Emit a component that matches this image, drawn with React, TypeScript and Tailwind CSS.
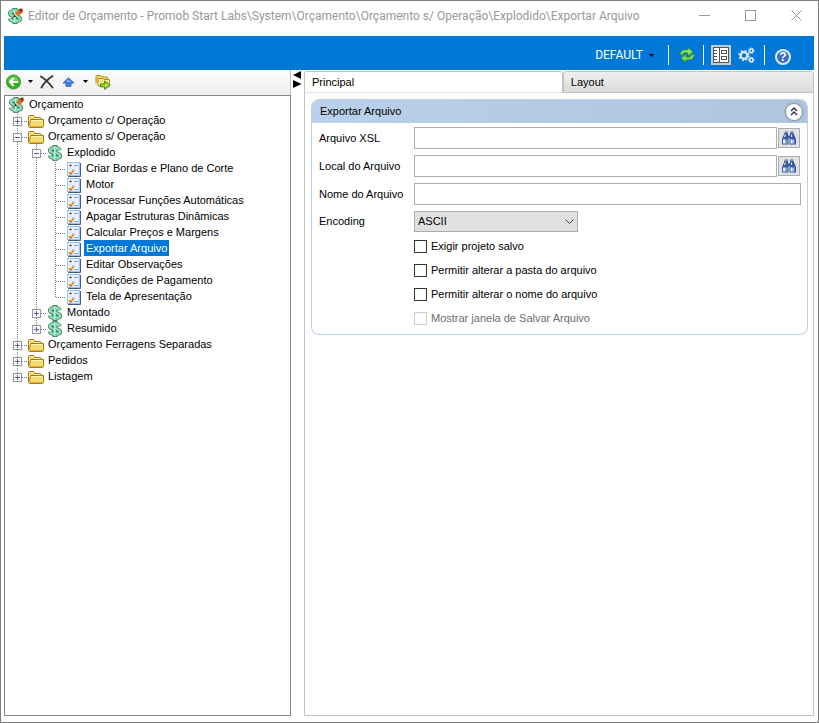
import { useState } from "react";
import type { ReactNode } from "react";

type IconKind = "root" | "folder" | "money" | "task";

interface TreeItem {
    label: string;
    icon: IconKind;
    children?: TreeItem[];
}

const tree: TreeItem[] = [
    { label: "Orçamento c/ Operação", icon: "folder", children: [] },
    {
        label: "Orçamento s/ Operação",
        icon: "folder",
        children: [
            {
                label: "Explodido",
                icon: "money",
                children: [
                    { label: "Criar Bordas e Plano de Corte", icon: "task" },
                    { label: "Motor", icon: "task" },
                    { label: "Processar Funções Automáticas", icon: "task" },
                    { label: "Apagar Estruturas Dinâmicas", icon: "task" },
                    { label: "Calcular Preços e Margens", icon: "task" },
                    { label: "Exportar Arquivo", icon: "task" },
                    { label: "Editar Observações", icon: "task" },
                    { label: "Condições de Pagamento", icon: "task" },
                    { label: "Tela de Apresentação", icon: "task" },
                ],
            },
            { label: "Montado", icon: "money", children: [] },
            { label: "Resumido", icon: "money", children: [] },
        ],
    },
    { label: "Orçamento Ferragens Separadas", icon: "folder", children: [] },
    { label: "Pedidos", icon: "folder", children: [] },
    { label: "Listagem", icon: "folder", children: [] },
];

/* ---------- icons ---------- */

function MoneyIcon({ pencil = false }: { pencil?: boolean }) {
    const curve = "M12.8 5.4C12 3.2 9.8 3 7.8 3 5 3 3 3.8 3 5.500c0 3.400 10 1.600 10 5 0 1.700-2.200 2.500-5 2.500-2.600 0-4.600-.6-5.200-2.600";
    return (
        <svg width="16" height="16" viewBox="0 0 16 16" fill="none" className="shrink-0">
            <path d="M5.500 0h5v16h-5z" fill="#3d8c6c" />
            <path d={curve} stroke="#3d8c6c" strokeWidth="4.200" />
            <path d="M6.500 1h3v14h-3z" fill="#8edcb8" />
            <path d={curve} stroke="#8edcb8" strokeWidth="2.400" />
            <path d="M5.200 5.600h1.300v1.200M10.800 10.400H9.500V9.300" stroke="#2c7456" />
            <path d="M7.500 2v12" stroke="#c9f3df" />
            {pencil && (
                <>
                    <path d="M7 8.8L8 5l3.500-3.200 3.500.2.300 3-3.700 2.800z" fill="#d0702c" />
                    <path d="M11.5 1.8L13 .6l2.500.2.300 2.500-1.300 1.200z" fill="#93310f" />
                    <path d="M7 8.8l1-3.600 2.800 2.400z" fill="#f4d5a0" />
                    <path d="M6.5 9.300l.7-2.600 2 1.800z" fill="#111" />
                </>
            )}
        </svg>
    );
}

function FolderIcon() {
    return (
        <svg width="17" height="16" viewBox="1 0 17 16" className="shrink-0">
            <path d="M1.5 13V3.5l1-1h4l1.5 2h5.5l1 1V7" fill="#efcf5a" stroke="#a87e12" />
            <path d="M2.5 12V4h3.6l1.3 1.6h6" fill="none" stroke="#fff3b8" />
            <path d="M1.6 13.6L3.8 6.5h12.7v7.2l-.9.8H2.4z" fill="#f7dc74" stroke="#a87e12" />
            <path d="M4.5 7.6h10.8" stroke="#fff7c8" />
            <path d="M3 13.4h12.4" stroke="#d5a936" />
        </svg>
    );
}

function TaskIcon() {
    return (
        <svg width="16" height="16" viewBox="0 0 16 16" className="shrink-0">
            <rect x="1.5" y="1.5" width="12" height="13" fill="#e6f1fd" stroke="#9dbce6" />
            <path d="M14.5 2v13.5H2" fill="none" stroke="#3a5e9c" />
            <path d="M13 2v12" stroke="#b9d2f2" />
            <path d="M3 4.5h3" stroke="#a2774a" />
            <path d="M4.5 3.5v2" stroke="#5b4a3a" />
            <path d="M8 4.5h4M8 12.5h4" stroke="#86a3cc" />
            <path d="M3 11.5l1.5 1.7L8 8.8" fill="none" stroke="#d08a1e" strokeWidth="1.8" />
        </svg>
    );
}

function NodeIcon({ kind }: { kind: IconKind }) {
    if (kind === "folder") return <FolderIcon />;
    if (kind === "task") return <TaskIcon />;
    return <MoneyIcon pencil={kind === "root"} />;
}

function BackIcon() {
    return (
        <svg width="16" height="16" viewBox="0 0 16 16">
            <circle cx="7.5" cy="8" r="7.1" fill="#2fb41a" stroke="#3c8f34" strokeWidth=".8" />
            <path d="M2 6.5a5.8 5.8 0 0 1 11 0c-3.6 1.6-7.4 1.6-11 0z" fill="#93e070" opacity=".6" />
            <path d="M7.8 4L4 8l3.8 4M4.5 8h7.8" fill="none" stroke="#fff" strokeWidth="2.1" />
        </svg>
    );
}

function DeleteIcon() {
    return (
        <svg width="14" height="14" viewBox="0 0 14 14">
            <path d="M1 1.5c4 2.5 8 6.5 11.5 11M12.5 1C8 4 4 8 1.5 12.5" fill="none" stroke="#35383d" strokeWidth="1.9" strokeLinecap="round" />
        </svg>
    );
}

function UpIcon() {
    return (
        <svg width="13" height="10" viewBox="0 0 13 10">
            <path d="M6.5.8L12 6H9v3.3H4V6H1z" fill="#3f7de0" stroke="#3a6cc8" strokeLinejoin="round" />
            <path d="M6.5 2l3 3h-6z" fill="#79a9f3" />
        </svg>
    );
}

function MoveFolderIcon() {
    return (
        <svg width="16" height="16" viewBox="0 0 16 16">
            <path d="M1 9.5v-8h4.5L7 3h5.5v2" fill="#f3d869" stroke="#b58d20" />
            <path d="M3 12V4.5h5l1 1h5.5V12z" fill="#f9e58a" stroke="#b58d20" />
            <path d="M5.5 10h4.2V7l5.5 4.3-5.5 4.1v-2.6H5.5z" fill="#a4e032" stroke="#3f7f10" />
        </svg>
    );
}

function RefreshIcon() {
    return (
        <svg width="18" height="16" viewBox="0 0 18 16">
            <path d="M2 7.5C2.5 3.5 6 2 10 3V.5L15 5l-5 4V6.2C7 5.2 5 5.5 4.5 8z" fill="#8ee05e" stroke="#2c8f2a" strokeWidth=".8" />
            <path d="M16.5 7.5c-.5 4.5-4 6-8.500 5.200v2.800L3 11l5-4v2.800c3 .8 5 .2 5.500-2.300z" fill="#7ed853" stroke="#2c8f2a" strokeWidth=".8" />
        </svg>
    );
}

function PanelIcon() {
    return (
        <svg width="16" height="16" viewBox="0 0 16 16">
            <rect x=".5" y=".5" width="15" height="15" fill="#fff" stroke="#555" />
            <path d="M6.5 1v14" stroke="#555" />
            <path d="M1 3.5h3M1 6.5h3M1 9.5h3M1 12.5h3" stroke="#555" />
            <rect x="8.5" y="3.5" width="5" height="3" fill="#fff" stroke="#555" />
            <rect x="8.5" y="9.5" width="5" height="3" fill="#fff" stroke="#555" />
        </svg>
    );
}

function GearsIcon() {
    return (
        <svg width="17" height="17" viewBox="0 0 17 17" fill="none" stroke="#e3e9ef">
            <circle cx="6" cy="8.5" r="3.3" strokeWidth="2.2" />
            <circle cx="6" cy="8.5" r="4.9" strokeWidth="1.5" strokeDasharray="2 1.85" />
            <circle cx="13.3" cy="3.7" r="1.7" strokeWidth="1.5" />
            <circle cx="13.3" cy="3.7" r="2.7" strokeWidth=".9" strokeDasharray="1.5 .62" />
            <circle cx="13.3" cy="13" r="1.7" strokeWidth="1.5" />
            <circle cx="13.3" cy="13" r="2.7" strokeWidth=".9" strokeDasharray="1.5 .62" />
        </svg>
    );
}

function BinocularsIcon() {
    return (
        <svg width="16" height="14" viewBox="0 0 16 14">
            <path d="M4 .5h2.5l.5 3 .5 2.5v7.500H1V8l2-4.500zM9.500.5H12l1 3L15 8v5.500H8.500V6L9 3.500z" fill="#34599c" />
            <path d="M6.5 4.5h3V7h-3z" fill="#34599c" />
            <path d="M2 8.5h4.5v4H2zM9.5 8.5H14v4H9.500z" fill="#9dbbe8" />
            <path d="M3 8.5v4M10.5 8.5v4" stroke="#f2f7ff" strokeWidth="1.5" />
            <path d="M6 8.5v4M13.5 8.5v4" stroke="#5078bc" />
            <path d="M3.5 6l1-2.5M10.5 6V3.500M4.500 1.500h1M10.500 1.500h1" stroke="#d3e2f7" strokeWidth="1.2" />
        </svg>
    );
}

function Caret() {
    return (
        <svg width="5" height="3" viewBox="0 0 5 3">
            <path d="M0 0h5L2.5 3z" fill="#000" />
        </svg>
    );
}

/* ---------- tree ---------- */

// One 19px column of the dotted guide lines
function Guide({ down, branch, last }: { down?: boolean; branch?: boolean; last?: boolean }) {
    return (
        <svg width="19" height="16" viewBox="0 0 19 16" className="block shrink-0">
            {(down || branch) && (
                <path d={last ? "M9.5 0v9" : "M9.5 0v16"} stroke="#808080" strokeDasharray="1 1" />
            )}
            {branch && <path d="M10 9.5h9" stroke="#808080" strokeDasharray="1 1" />}
        </svg>
    );
}

interface NodeProps {
    item: TreeItem;
    last: boolean;
    lines: boolean[];
    selected: string;
    onSelect: (label: string) => void;
}

function TreeNode({ item, last, lines, selected, onSelect }: NodeProps) {
    const [open, setOpen] = useState(!!item.children?.length);
    const active = selected === item.label;

    return (
        <li>
            <div className="flex h-4 items-center">
                {lines.map((line, i) => (
                    <Guide key={i} down={line} />
                ))}
                <div className="relative shrink-0">
                    <Guide branch last={last} />
                    {item.children && (
                        <button
                            type="button"
                            aria-label={(open ? "Recolher " : "Expandir ") + item.label}
                            onClick={() => setOpen(!open)}
                            className="absolute top-[5px] left-[5px]"
                        >
                            <svg width="9" height="9" viewBox="0 0 9 9" className="block">
                                <rect x=".5" y=".5" width="8" height="8" fill="#fafafa" stroke="#969696" />
                                <path d={open ? "M2 4.5h5" : "M2 4.5h5M4.5 2v5"} stroke="#4b63a7" />
                            </svg>
                        </button>
                    )}
                </div>
                <button type="button" onClick={() => onSelect(item.label)} className="flex h-4 items-center">
                    <span className="flex w-[19px] pt-px pl-px">
                        <NodeIcon kind={item.icon} />
                    </span>
                    <span className={"h-4 px-0.5 leading-4 whitespace-nowrap " + (active ? "bg-[#0078d7] text-white" : "")}>
                        {item.label}
                    </span>
                </button>
            </div>
            {open && item.children && (
                <ul>
                    {item.children.map((child, i) => (
                        <TreeNode
                            key={child.label}
                            item={child}
                            last={i === item.children!.length - 1}
                            lines={[...lines, !last]}
                            selected={selected}
                            onSelect={onSelect}
                        />
                    ))}
                </ul>
            )}
        </li>
    );
}

/* ---------- form ---------- */

function Field({ id, label, search }: { id: string; label: string; search?: boolean }) {
    return (
        <div className="flex items-center">
            <label htmlFor={id} className="w-[95px] shrink-0">{label}</label>
            <input id={id} type="text" className="h-[22px] min-w-0 flex-1 border border-[#abadb3] bg-white px-1 outline-none focus:border-[#0078d7]" />
            {search && (
                <button
                    type="button"
                    aria-label={"Procurar " + label}
                    className="mx-px flex h-5 w-[22px] items-center justify-center border border-[#adadad] bg-[#e1e1e1]"
                >
                    <BinocularsIcon />
                </button>
            )}
        </div>
    );
}

function Check({ children, disabled }: { children: ReactNode; disabled?: boolean }) {
    return (
        <label className={"flex h-6 items-center gap-1 " + (disabled ? "text-[#6d6d6d]" : "")}>
            <input
                type="checkbox"
                disabled={disabled}
                className="size-[13px] appearance-none border border-[#333] bg-white checked:bg-[#0078d7] disabled:border-[#ccc]"
            />
            {children}
        </label>
    );
}

export default function App() {
    const [selected, setSelected] = useState("Exportar Arquivo");
    const [tab, setTab] = useState("Principal");
    const [collapsed, setCollapsed] = useState(false);

    return (
        <div className="flex h-screen flex-col border border-[#7f7f7f] bg-white pr-1 pb-1.5 pl-[3px] font-['Liberation_Sans',Arial,sans-serif] text-[11px] text-black">
            {/* title bar */}
            <header className="flex h-[35px] shrink-0 items-center pb-1.5 pl-[3px] font-[Roboto,sans-serif] text-xs text-[#999]">
                <MoneyIcon pencil />
                <h1 className="ml-[5px] flex-1 truncate">
                    Editor de Orçamento - Promob Start Labs\System\Orçamento\Orçamento s/ Operação\Explodido\Exportar Arquivo
                </h1>
                <div className="flex items-center gap-[35px] pr-3">
                    <button type="button" aria-label="Minimizar">
                        <svg width="11" height="11" className="block"><path d="M0 5.5h11" stroke="#999" /></svg>
                    </button>
                    <button type="button" aria-label="Maximizar">
                        <svg width="11" height="11" className="block"><rect x=".5" y=".5" width="10" height="10" fill="none" stroke="#999" /></svg>
                    </button>
                    <button type="button" aria-label="Fechar">
                        <svg width="11" height="11" className="block"><path d="M.5.5l10 10M10.5.5l-10 10" stroke="#999" /></svg>
                    </button>
                </div>
            </header>

            {/* blue bar */}
            <div className="flex h-[34px] shrink-0 items-center justify-end bg-[#0078d7] pt-1 pr-[23px] text-white">
                <button type="button" className="mr-[14px] flex items-center gap-1.5 font-[Roboto,sans-serif] text-xs">
                    DEFAULT <Caret />
                </button>
                <span className="h-5 w-px bg-white" />
                <button type="button" aria-label="Atualizar" className="mr-[7px] ml-[9px]"><RefreshIcon /></button>
                <span className="h-5 w-px bg-white" />
                <button type="button" aria-label="Painel" className="ml-[7px] flex size-5 items-center justify-center bg-[#c5ccd3]"><PanelIcon /></button>
                <button type="button" aria-label="Configurações" className="mr-[9px] ml-[7px]"><GearsIcon /></button>
                <span className="h-5 w-px bg-white" />
                <button
                    type="button"
                    aria-label="Ajuda"
                    className="mt-1 ml-[10px] flex size-4 items-center justify-center rounded-full border-2 border-[#dfe8f5] bg-[#3a6cd0] text-[12px] leading-none font-bold"
                >
                    ?
                </button>
            </div>

            <div className="flex min-h-0 flex-1">
                {/* left side */}
                <aside className="flex w-[287px] shrink-0 flex-col">
                    <div className="flex h-[25px] shrink-0 items-center border-r border-[#c0c0c0] bg-linear-to-b from-[#fbfbfb] to-[#efefef] pb-0.5 pl-0.5">
                        <button type="button" aria-label="Adicionar" className="flex items-center gap-[6px]"><BackIcon /><Caret /></button>
                        <button type="button" aria-label="Excluir" className="ml-[7px]"><DeleteIcon /></button>
                        <button type="button" aria-label="Mover para cima" className="ml-2 flex items-center gap-2"><UpIcon /><Caret /></button>
                        <button type="button" aria-label="Mover para pasta" className="ml-[7px]"><MoveFolderIcon /></button>
                    </div>
                    <nav className="min-h-0 flex-1 overflow-auto border border-[#828790] pl-[3px]">
                        <button type="button" onClick={() => setSelected("Orçamento")} className="flex h-4 items-center">
                            <span className="flex w-[19px] pt-px"><NodeIcon kind="root" /></span>
                            <span className={"h-4 px-0.5 leading-4 " + (selected === "Orçamento" ? "bg-[#0078d7] text-white" : "")}>Orçamento</span>
                        </button>
                        <ul>
                            {tree.map((item, i) => (
                                <TreeNode key={item.label} item={item} last={i === tree.length - 1} lines={[]} selected={selected} onSelect={setSelected} />
                            ))}
                        </ul>
                    </nav>
                </aside>

                {/* splitter */}
                <div className="w-[13px] shrink-0 pt-px pl-0.5">
                    <svg width="9" height="18" viewBox="0 0 9 18" className="block">
                        <path d="M8 0v8L0 4zM0 9v8l8.5-4z" fill="#000" />
                    </svg>
                </div>

                {/* right side */}
                <main className="flex min-w-0 flex-1 flex-col pt-px">
                    <div role="tablist" className="flex h-[22px] shrink-0">
                        {["Principal", "Layout"].map((name) => (
                            <button
                                key={name}
                                type="button"
                                role="tab"
                                aria-selected={tab === name}
                                onClick={() => setTab(name)}
                                className={
                                    "rounded-t-[3px] border border-[#c3c3c3] pl-[7px] text-left " +
                                    (name === "Principal" ? "flex-[259] " : "flex-[251] ") +
                                    (tab === name ? "border-b-[#e0e0e0] bg-white" : "bg-linear-to-b from-[#efefef] to-[#dcdcdc]")
                                }
                            >
                                {name}
                            </button>
                        ))}
                    </div>
                    <div className="min-h-0 flex-1 border border-t-0 border-[#c3c3c3] pt-1.5 pr-[5px] pl-1.5">
                        <section className="rounded-lg border border-[#b8d0ea]">
                            <div className="flex h-[23px] items-center justify-between rounded-t-[7px] bg-linear-to-r from-[#b9d1ea] to-[#b0c4de] pr-[5px] pl-2">
                                <h2>Exportar Arquivo</h2>
                                <button
                                    type="button"
                                    aria-label="Recolher"
                                    onClick={() => setCollapsed(!collapsed)}
                                    className="flex size-4 items-center justify-center rounded-full bg-white shadow-[0_0_2px_1px_#7d8798]"
                                >
                                    <svg width="8" height="9" viewBox="0 0 8 9" fill="none" stroke="#23315e" strokeWidth="1.4">
                                        <path d="M1 4l3-3 3 3M1 8l3-3 3 3" />
                                    </svg>
                                </button>
                            </div>
                            {!collapsed && (
                                <div className="flex flex-col gap-1.5 pt-1 pr-1.5 pb-1 pl-[7px]">
                                    <Field id="xsl" label="Arquivo XSL" search />
                                    <Field id="local" label="Local do Arquivo" search />
                                    <Field id="nome" label="Nome do Arquivo" />
                                    <div className="flex items-center">
                                        <label htmlFor="encoding" className="w-[95px] shrink-0">Encoding</label>
                                        <div className="relative">
                                            <select id="encoding" className="block h-[21px] w-[164px] appearance-none border border-[#adadad] bg-[#e1e1e1] pl-[3px]">
                                                <option>ASCII</option>
                                                <option>UTF-8</option>
                                                <option>Unicode</option>
                                            </select>
                                            <svg width="9" height="6" viewBox="0 0 9 6" className="pointer-events-none absolute top-2 right-1">
                                                <path d="M.5.5l4 4 4-4" fill="none" stroke="#444" />
                                            </svg>
                                        </div>
                                    </div>
                                    <div className="-mt-1 pl-[95px]">
                                        <Check>Exigir projeto salvo</Check>
                                        <Check>Permitir alterar a pasta do arquivo</Check>
                                        <Check>Permitir alterar o nome do arquivo</Check>
                                        <Check disabled>Mostrar janela de Salvar Arquivo</Check>
                                    </div>
                                </div>
                            )}
                        </section>
                    </div>
                </main>
            </div>
        </div>
    );
}
